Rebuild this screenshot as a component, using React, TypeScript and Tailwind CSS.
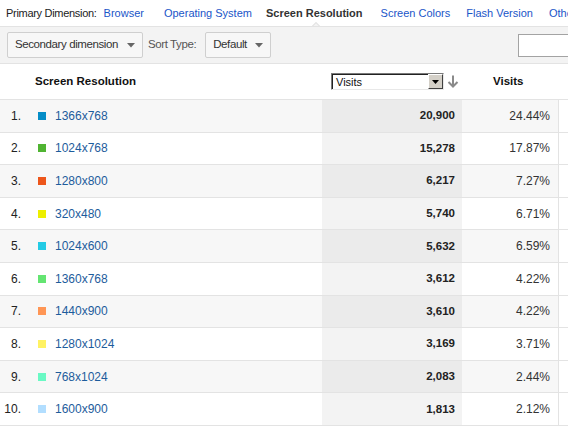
import React from "react";

const rows = [
  { n: "1.", c: "bg-[#058dc7]", r: "1366x768", v: "20,900", p: "24.44%" },
  { n: "2.", c: "bg-[#50b432]", r: "1024x768", v: "15,278", p: "17.87%" },
  { n: "3.", c: "bg-[#ed561b]", r: "1280x800", v: "6,217", p: "7.27%" },
  { n: "4.", c: "bg-[#edef00]", r: "320x480", v: "5,740", p: "6.71%" },
  { n: "5.", c: "bg-[#24cbe5]", r: "1024x600", v: "5,632", p: "6.59%" },
  { n: "6.", c: "bg-[#64e572]", r: "1360x768", v: "3,612", p: "4.22%" },
  { n: "7.", c: "bg-[#ff9655]", r: "1440x900", v: "3,610", p: "4.22%" },
  { n: "8.", c: "bg-[#fff263]", r: "1280x1024", v: "3,169", p: "3.71%" },
  { n: "9.", c: "bg-[#6af9c4]", r: "768x1024", v: "2,083", p: "2.44%" },
  { n: "10.", c: "bg-[#b2deff]", r: "1600x900", v: "1,813", p: "2.12%" },
];

function Caret() {
  return (
    <svg width="8" height="5" viewBox="0 0 8 5" className="shrink-0">
      <path d="M0 0 L8 0 L4 4.5 Z" fill="#666" />
    </svg>
  );
}

export default function App() {
  return (
    <div
      className="relative w-[568px] h-[434px] overflow-hidden bg-white text-[#222]"
      style={{ fontFamily: '"Liberation Sans", Arial, sans-serif' }}
    >
      {/* Primary dimension bar */}
      <div className="relative h-[27px] flex items-center pl-[6px] text-[11px] whitespace-nowrap border-b border-[#e3e3e3] overflow-hidden">
        <span className="text-[#222] tracking-[-0.3px]">Primary Dimension:</span>
        <span className="ml-[7px] text-[#1a55c8]">Browser</span>
        <span className="ml-[20px] text-[#1a55c8]">Operating System</span>
        <span className="ml-[14px] font-bold text-[#333]">Screen Resolution</span>
        <span className="ml-[18px] text-[#1a55c8]">Screen Colors</span>
        <span className="ml-[16px] text-[#1a55c8]">Flash Version</span>
        <span className="ml-[16px] text-[#1a55c8]">Other</span>
        {/* notch */}
        <div className="absolute left-[311px] bottom-[-1px] w-0 h-0 border-l-[5px] border-r-[5px] border-b-[5px] border-l-transparent border-r-transparent border-b-[#d8d8d8]" />
        <div className="absolute left-[312px] bottom-[-1px] w-0 h-0 border-l-[4px] border-r-[4px] border-b-[4px] border-l-transparent border-r-transparent border-b-[#f3f3f3]" />
      </div>

      {/* Toolbar */}
      <div className="h-[37px] flex items-center bg-[#f3f3f3] border-b border-[#e3e3e3] text-[11.5px] tracking-[-0.4px] whitespace-nowrap">
        <div className="ml-[7px] w-[136px] h-[26px] flex items-center justify-between pl-[7px] pr-[7px] border border-[#cfcfcf] rounded-[2px] bg-[#f7f7f7] text-[#333]">
          <span>Secondary dimension</span>
          <Caret />
        </div>
        <span className="ml-[5px] text-[#555]">Sort Type:</span>
        <div className="ml-[9px] w-[66px] h-[26px] flex items-center justify-between pl-[7px] pr-[7px] border border-[#cfcfcf] rounded-[2px] bg-[#f7f7f7] text-[#333]">
          <span>Default</span>
          <Caret />
        </div>
        <div className="ml-auto w-[50px] h-[23px] bg-white border border-r-0 border-[#a3a3a3]" />
      </div>

      {/* Header row */}
      <div className="h-[36px] flex items-center border-b border-[#e3e3e3]">
        <div className="w-[322px] pl-[35px] text-[11.5px] font-bold text-[#111]">Screen Resolution</div>
        <div className="w-[140px] flex items-center pl-[9px]">
          <div className="w-[113px] h-[17px] flex items-stretch border-t border-l border-[#7a7a7a] border-b border-r border-b-[#e8e8e8] border-r-[#e8e8e8] bg-white">
            <div className="flex-1 flex items-center border-t border-l border-[#222] pl-[3px] text-[11px] text-[#111]">
              Visits
            </div>
            <div className="w-[15px] flex items-center justify-center bg-[#d4d0c8] border-t border-l border-t-white border-l-white border-b border-r border-b-[#404040] border-r-[#404040]">
              <svg width="7" height="4" viewBox="0 0 7 4">
                <path d="M0 0 L7 0 L3.5 4 Z" fill="#000" />
              </svg>
            </div>
          </div>
          <svg width="12" height="13" viewBox="0 0 12 13" className="ml-[3px]">
            <path d="M6 0.5 V11.5" stroke="#8a8a8a" strokeWidth="2" />
            <path d="M1.5 7 L6 11.5 L10.5 7" stroke="#8a8a8a" strokeWidth="2" fill="none" />
          </svg>
        </div>
        <div className="w-[97px] pl-[31px] text-[11.5px] font-bold text-[#111]">Visits</div>
      </div>

      {/* Rows */}
      {rows.map((row, i) => {
        const odd = i % 2 === 0;
        return (
          <div key={row.n} className="h-[32.6px] flex border-b border-[#e3e3e3]">
            <div className={`w-[559px] flex items-center border-r border-[#e3e3e3] ${odd ? "bg-[#f7f7f7]" : "bg-white"}`}>
              <div className="w-[322px] flex items-center text-[12px]">
                <span className="w-[21px] text-right text-[#222]">{row.n}</span>
                <span className={`ml-[17px] w-[8px] h-[8px] ${row.c}`} />
                <span className="ml-[9px] text-[#1d5c9c]">{row.r}</span>
              </div>
              <div className={`w-[140px] h-full flex items-center justify-end pr-[7px] text-[11.5px] font-bold text-[#222] ${odd ? "bg-[#ebebeb]" : "bg-[#f3f3f3]"}`}>
                {row.v}
              </div>
              <div className="flex-1 flex items-center justify-end pr-[8px] text-[12px] text-[#333]">
                {row.p}
              </div>
            </div>
          </div>
        );
      })}
    </div>
  );
}
